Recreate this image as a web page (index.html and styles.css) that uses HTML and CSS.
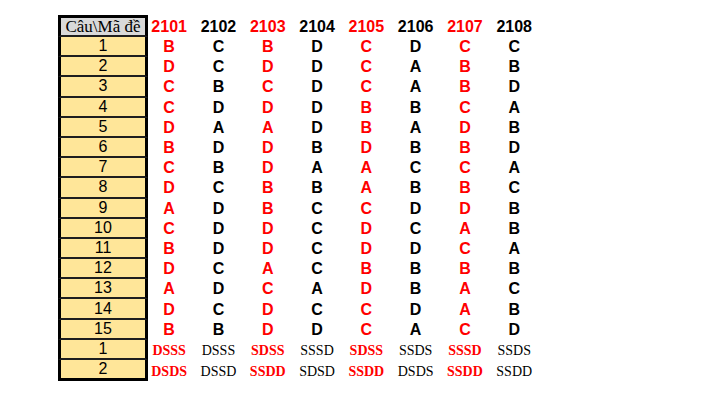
FILE: index.html
```html
<!DOCTYPE html>
<html>
<head>
<meta charset="utf-8">
<link rel="stylesheet" href="styles.css">
</head>
<body>
<div class="sheet" id="sheet">
  <div class="lab head">Câu\Mã đề</div>
  <div class="code r">2101</div><div class="code">2102</div><div class="code r">2103</div><div class="code">2104</div><div class="code r">2105</div><div class="code">2106</div><div class="code r">2107</div><div class="code">2108</div>
</div>
<script src="app.js"></script>
</body>
</html>
```
FILE: app.js
```js
var rows = [
"BCBDCDCC","DCDDCABB","CBCDCABD","CDDDBBCA","DAADBADB","BDDBDBBD","CBDAACCA","DCBBABBC",
"ADBCCDDB","CDDCDCAB","BDDCDDCA","DCACBBBB","ADCADBAC","DCDCCDAB","BBDDCACD"];
var bottom = [
["DSSS","DSSS","SDSS","SSSD","SDSS","SSDS","SSSD","SSDS"],
["DSDS","DSSD","SSDD","SDSD","SSDD","DSDS","SSDD","SSDD"]];
var s = document.getElementById('sheet');
function add(cls, txt){ var d=document.createElement('div'); d.className=cls; d.textContent=txt; s.appendChild(d); }
rows.forEach(function(r,i){
  add('lab', String(i+1));
  for (var j=0;j<8;j++) add('ans'+(j%2===0?' r':''), r[j]);
});
bottom.forEach(function(r,i){
  add('lab'+(i===1?' last':''), String(i+1));
  for (var j=0;j<8;j++) add('tf'+(j%2===0?' r':''), r[j]);
});
```
FILE: styles.css
```css
html, body { margin: 0; padding: 0; background: #fff; }
body { width: 712px; height: 403px; overflow: hidden; }
.sheet {
  display: grid;
  grid-template-columns: 90px repeat(8, 49.3px);
  grid-template-rows: 22px repeat(16, 20.2px) 21px;
  margin: 15px 0 0 58px;
}
.lab {
  background: #ffe699;
  border-left: 3px solid #000;
  border-right: 3px solid #000;
  border-bottom: 2px solid #1e1e1e;
  font-family: "Liberation Sans", Arial, sans-serif;
  font-size: 16px;
  color: #000;
  display: flex;
  align-items: center;
  justify-content: center;
  box-sizing: border-box;
}
.lab.head {
  background: #d9d9d9;
  border-top: 3px solid #000;
  font-family: "Liberation Serif", "Times New Roman", serif;
  font-size: 17px;
  white-space: nowrap;
}
.lab.last { border-bottom: 3px solid #000; }
.code, .ans, .tf {
  display: flex;
  align-items: center;
  justify-content: center;
  padding-right: 7px;
  color: #000;
}
.code, .ans {
  font-family: "Liberation Sans", Arial, sans-serif;
  font-weight: bold;
  font-size: 16px;
}
.code { padding-top: 2px; }
.tf {
  font-family: "Liberation Serif", "Times New Roman", serif;
  font-size: 14px;
  padding-top: 2px;
}
.tf.r { font-weight: bold; }
.r { color: #ff0000; }
```
